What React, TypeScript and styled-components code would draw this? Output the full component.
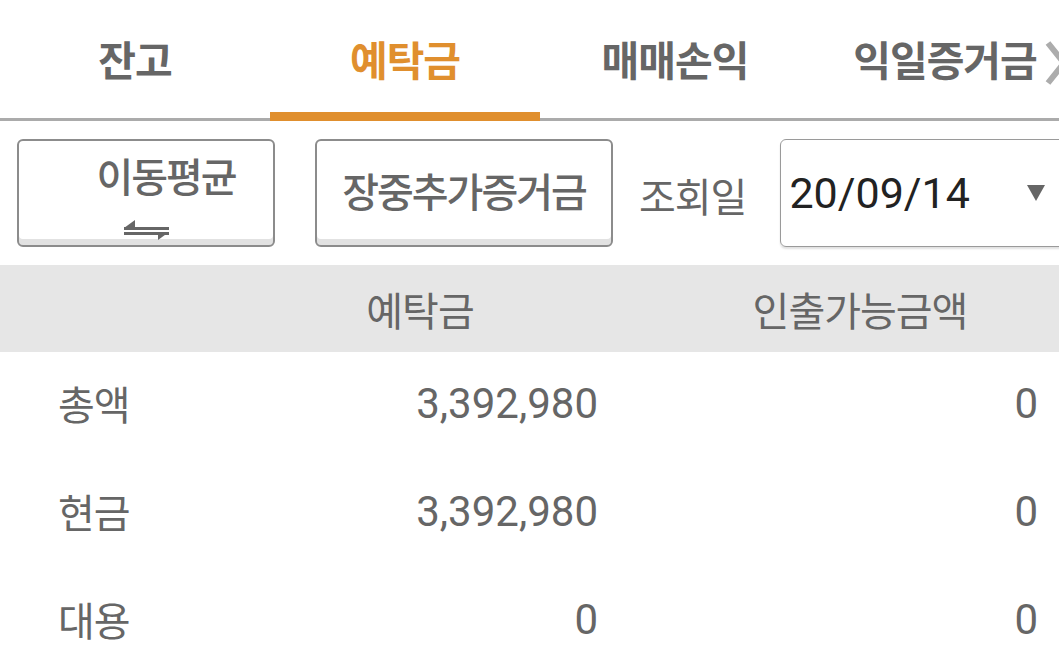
import React from "react";
import styled, { createGlobalStyle } from "styled-components";

const GlobalStyle = createGlobalStyle`
  * {
    box-sizing: border-box;
  }
  html, body {
    margin: 0;
    padding: 0;
    background: #ffffff;
    overflow: hidden;
  }
  body {
    width: 1059px;
    font-family: Roboto, "Noto Sans CJK KR", sans-serif;
    color: #666666;
  }
`;

const tabs = ["잔고", "예탁금", "매매손익", "익일증거금"];

const rows = [
  { label: "총액", deposit: "3,392,980", withdraw: "0" },
  { label: "현금", deposit: "3,392,980", withdraw: "0" },
  { label: "대용", deposit: "0", withdraw: "0" },
];

export default function App() {
  const active = 1;

  return (
    <>
      <GlobalStyle />
      <Page>
        <TabBar>
          {tabs.map((t, i) => (
            <Tab key={t} $active={i === active}>
              {t}
            </Tab>
          ))}
          <MoreArrow width="24" height="46" viewBox="0 0 24 46">
            <polyline
              points="4,3 20,23 4,43"
              fill="none"
              stroke="#acacac"
              strokeWidth="6"
            />
          </MoreArrow>
        </TabBar>

        <Toolbar>
          <ToggleButton>
            <ButtonLabel $shift>이동평균</ButtonLabel>
            <svg width="48" height="22" viewBox="0 0 48 22">
              <polygon points="2,9 13,1 13,9" fill="#666" />
              <rect x="2" y="8" width="45" height="3" fill="#666" />
              <rect x="2" y="13" width="45" height="3" fill="#666" />
              <polygon points="47,13 36,13 36,21" fill="#666" />
            </svg>
          </ToggleButton>
          <ActionButton>
            <ButtonLabel>장중추가증거금</ButtonLabel>
          </ActionButton>
          <DateLabel>조회일</DateLabel>
          <DateSelect>
            <DateValue>20/09/14</DateValue>
            <svg width="18" height="16" viewBox="0 0 18 16">
              <polygon points="0,0 18,0 9,16" fill="#666" />
            </svg>
          </DateSelect>
        </Toolbar>

        <HeaderRow>
          <HeaderCell />
          <HeaderCell>예탁금</HeaderCell>
          <HeaderCell $last>인출가능금액</HeaderCell>
        </HeaderRow>

        {rows.map((r) => (
          <DataRow key={r.label}>
            <RowLabel>{r.label}</RowLabel>
            <Amount>{r.deposit}</Amount>
            <Amount $last>{r.withdraw}</Amount>
          </DataRow>
        ))}
      </Page>
    </>
  );
}

const Page = styled.div`
  width: 1059px;
  height: 665px;
  overflow: hidden;
`;

const TabBar = styled.div`
  position: relative;
  display: flex;
  height: 121px;
  border-bottom: 3px solid #ababab;
`;

const Tab = styled.div<{ $active?: boolean }>`
  flex: 0 0 270px;
  display: flex;
  align-items: center;
  justify-content: center;
  padding-top: 4px;
  margin-bottom: -3px;
  font-family: "Noto Sans CJK KR", sans-serif;
  font-size: 41px;
  font-weight: 700;
  letter-spacing: -1px;
  white-space: nowrap;
  color: ${(p) => (p.$active ? "#e08f2e" : "#666666")};
  border-bottom: 9px solid ${(p) => (p.$active ? "#e08f2e" : "transparent")};
`;

const MoreArrow = styled.svg`
  position: absolute;
  left: 1044px;
  top: 40px;
`;

const Toolbar = styled.div`
  display: flex;
  align-items: center;
  height: 144px;
  padding: 18px 0 18px 17px;
`;

const ButtonBase = styled.div`
  height: 108px;
  border: 2px solid #8c8c8c;
  border-radius: 6px;
  background: #ffffff;
  box-shadow: inset 0 -6px 0 #e2e2e2;
  display: flex;
  flex-direction: column;
  align-items: center;
  justify-content: center;
  flex-shrink: 0;
`;

const ToggleButton = styled(ButtonBase)`
  width: 258px;
  justify-content: flex-start;
  padding-top: 14px;
  gap: 24px;
`;

const ActionButton = styled(ButtonBase)`
  width: 298px;
  margin-left: 40px;
  padding-bottom: 6px;
`;

const ButtonLabel = styled.span<{ $shift?: boolean }>`
  font-family: "Noto Sans CJK KR", sans-serif;
  font-size: 40px;
  font-weight: 500;
  line-height: 1;
  letter-spacing: -2px;
  white-space: nowrap;
  color: #666666;
  margin-left: ${(p) => (p.$shift ? "40px" : "0")};
`;

const DateLabel = styled.span`
  flex-shrink: 0;
  white-space: nowrap;
  margin-left: 26px;
  font-family: "Noto Sans CJK KR", sans-serif;
  font-size: 40px;
  color: #666666;
  letter-spacing: -1px;
  padding-top: 4px;
`;

const DateSelect = styled.div`
  width: 290px;
  height: 108px;
  margin-left: 34px;
  flex-shrink: 0;
  border: 1px solid #9a9a9a;
  border-radius: 6px;
  box-shadow: 0 2px 2px rgba(0, 0, 0, 0.12);
  display: flex;
  align-items: center;
  padding: 0 0 0 8px;
  gap: 58px;
`;

const DateValue = styled.span`
  font-family: Roboto, sans-serif;
  font-size: 43px;
  color: #222222;
  width: 180px;
`;

const grid = `
  display: grid;
  grid-template-columns: 240px 360px 459px;
  align-items: center;
`;

const HeaderRow = styled.div`
  ${grid}
  height: 87px;
  background: #e6e6e6;
`;

const HeaderCell = styled.div<{ $last?: boolean }>`
  text-align: center;
  font-family: "Noto Sans CJK KR", sans-serif;
  font-size: 40px;
  color: #666666;
  letter-spacing: -1px;
  white-space: nowrap;
  padding: ${(p) => (p.$last ? "0 19px 0 80px" : "0")};
`;

const DataRow = styled.div`
  ${grid}
  height: 108px;
  padding-bottom: 6px;
`;

const RowLabel = styled.div`
  padding-left: 58px;
  font-family: "Noto Sans CJK KR", sans-serif;
  font-size: 40px;
  color: #666666;
  letter-spacing: -1px;
`;

const Amount = styled.div<{ $last?: boolean }>`
  text-align: right;
  font-family: Roboto, sans-serif;
  font-size: 42px;
  color: #666666;
  padding-right: ${(p) => (p.$last ? "21px" : "2px")};
`;
